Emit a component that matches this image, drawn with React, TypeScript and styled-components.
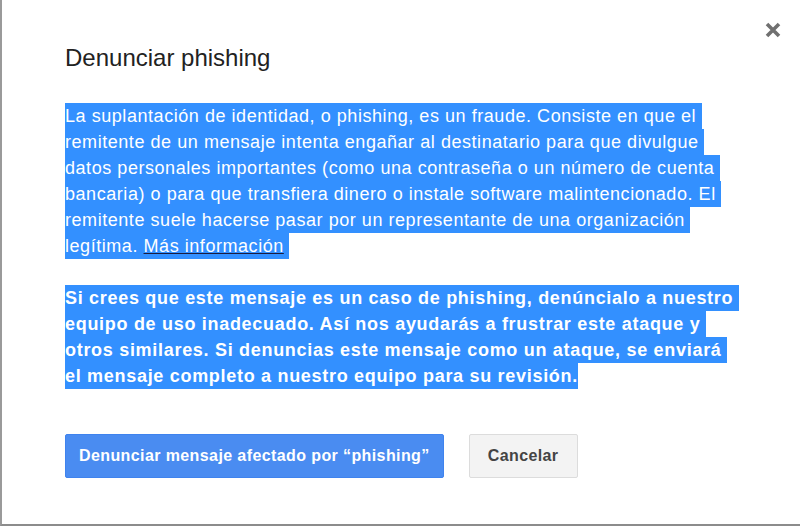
import styled, { createGlobalStyle } from 'styled-components';

const Global = createGlobalStyle`
  html, body {
    margin: 0;
    padding: 0;
    background: #fff;
  }
  body {
    font-family: "Liberation Sans", Arial, sans-serif;
  }
`;

const Dialog = styled.div`
  position: relative;
  width: 800px;
  height: 526px;
  box-sizing: border-box;
  border-left: 2px solid #9a9a9a;
  border-bottom: 2px solid #8c8c8c;
  background: #fff;
  padding: 44px 55px 0 63px;
  display: flex;
  flex-direction: column;
`;

const Close = styled.button`
  position: absolute;
  top: 21px;
  right: 18px;
  width: 18px;
  height: 18px;
  padding: 0;
  border: none;
  background: none;
  cursor: pointer;
  display: flex;
`;

const Title = styled.h2`
  margin: 0 0 31px;
  font-size: 24px;
  line-height: 28px;
  font-weight: normal;
  color: #222;
`;

const Para = styled.p<{ bold?: boolean }>`
  margin: 0;
  font-size: 18px;
  line-height: 26px;
  font-weight: ${(p) => (p.bold ? 'bold' : 'normal')};
  letter-spacing: ${(p) => (p.bold ? 0.7 : 0.55)}px;
  white-space: break-spaces;
  & + & {
    margin-top: 26px;
  }
`;

const Selected = styled.span`
  background: #3390ff;
  color: #fff;
  padding: 3px 0;
`;

const Link = styled.a`
  color: #fff;
  text-decoration: underline;
  text-decoration-color: #1c1c3c;
  cursor: pointer;
`;

const Buttons = styled.div`
  display: flex;
  gap: 25px;
  margin-top: 45px;
`;

const Button = styled.button<{ primary?: boolean }>`
  height: 44px;
  box-sizing: border-box;
  padding: 0 ${(p) => (p.primary ? 13 : 18)}px;
  border-radius: 2px;
  border: 1px solid ${(p) => (p.primary ? '#3f83ee' : '#dcdcdc')};
  background: ${(p) => (p.primary ? '#4a8cf1' : '#f3f3f3')};
  color: ${(p) => (p.primary ? '#fff' : '#444')};
  font-family: "Liberation Sans", Arial, sans-serif;
  font-size: 16px;
  font-weight: bold;
  letter-spacing: 0.4px;
  cursor: pointer;
`;

const App = () => (
  <Dialog>
    <Global />
    <Close aria-label="Cerrar">
      <svg width="18" height="18" viewBox="0 0 18 18">
        <path d="M3 3 L15 15 M15 3 L3 15" stroke="#707070" strokeWidth="3.6" />
      </svg>
    </Close>
    <Title>Denunciar phishing</Title>
    <Para>
      <Selected>
        La suplantación de identidad, o phishing, es un fraude. Consiste en que el remitente de un
        mensaje intenta engañar al destinatario para que divulgue datos personales importantes (como
        una contraseña o un número de cuenta bancaria) o para que transfiera dinero o instale software
        malintencionado. El remitente suele hacerse pasar por un representante de una organización
        legítima. <Link>Más información</Link>{' '}
      </Selected>
    </Para>
    <Para bold>
      <Selected>
        Si crees que este mensaje es un caso de phishing, denúncialo a nuestro equipo de uso
        inadecuado. Así nos ayudarás a frustrar este ataque y otros similares. Si denuncias este
        mensaje como un ataque, se enviará el mensaje completo a nuestro equipo para su revisión.
      </Selected>
    </Para>
    <Buttons>
      <Button primary>Denunciar mensaje afectado por “phishing”</Button>
      <Button>Cancelar</Button>
    </Buttons>
  </Dialog>
);

export default App;
